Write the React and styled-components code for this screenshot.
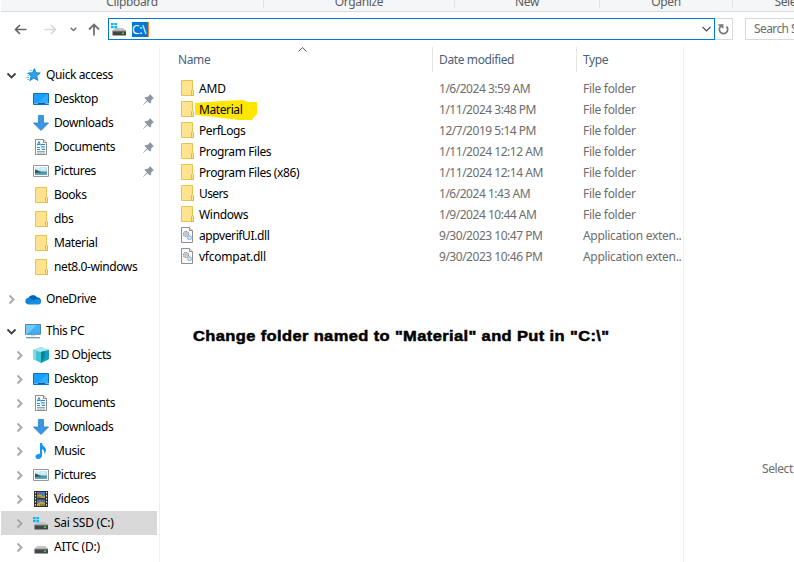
import React from "react";
import styled, { createGlobalStyle, css } from "styled-components";

const Global = createGlobalStyle`
  * { box-sizing: border-box; }
  html, body { margin: 0; padding: 0; background: #fff; overflow: hidden; }
  body { font-family: "Noto Sans", "Open Sans", sans-serif; font-size: 12px; color: #000; }
  svg { display: block; flex: none; }
`;

const Window = styled.div`
  width: 794px; height: 562px; overflow: hidden;
  display: flex; flex-direction: column; background: #fff;
`;
const Ribbon = styled.div`
  height: 12px; flex: none; margin-left: 1px; overflow: hidden;
  display: grid; grid-template-columns: 263px 191px 145px 133px 115px;
  background: #f5f6f7; border-bottom: 1px solid #dadbdc;
`;
const RibbonGroup = styled.div`
  height: 8px; line-height: 16px; text-align: center; color: #5a5d61;
  border-right: 1px solid #e2e3e4;
  letter-spacing: -0.35px;
  span { display: block; margin-top: -6px; }
`;
const NavBar = styled.div`
  height: 35px; flex: none; display: flex; align-items: flex-start; padding: 6px 0 0 8px;
`;
const NavButton = styled.div`
  width: ${(p) => p.$w}px; flex: none; height: 22px; display: flex; align-items: center; justify-content: center;
`;
const AddressBar = styled.div`
  width: 607px; flex: none; height: 22px; border: 1px solid #0078d7; margin-left: 1px;
  display: flex; align-items: center; padding: 0 3px 0 2px;
`;
const AddressText = styled.span`
  height: 15px; line-height: 15px; width: 17px; margin-left: 5px; background: #0078d7; color: #fff;
  border-right: 1px solid #ff8728; letter-spacing: -0.4px; white-space: nowrap;
`;
const Refresh = styled.div`
  width: 18px; flex: none; height: 22px; border: 1px solid #d9d9d9; border-left: 0;
  display: flex; align-items: center; justify-content: center;
`;
const Search = styled.div`
  width: 100px; flex: none; height: 22px; margin-left: 12px; border: 1px solid #d9d9d9; border-right: 0;
  padding-left: 8px; line-height: 20px; color: #6d6d6d; white-space: nowrap; letter-spacing: -0.6px;
`;
const Spacer = styled.div`flex: 1;`;
const Body = styled.div`
  flex: 1; min-height: 0; display: grid; grid-template-columns: 160px 524px 1fr;
`;
const Tree = styled.div`
  border-right: 1px solid #f0f0f0; padding: 16px 2px 0 1px; display: flex; flex-direction: column;
`;
const TreeRow = styled.div`
  height: 24px; flex: none; display: flex; align-items: center;
  padding-left: ${(p) => (p.$level ? 12 : 4)}px;
  margin-top: ${(p) => (p.$gap ? 8 : 0)}px;
  ${(p) => p.$selected && css`background: #d9d9d9;`}
`;
const Arrow = styled.div`width: 13px; height: 13px; margin-right: 7px;`;
const Label = styled.span`
  line-height: 18px; white-space: nowrap; margin-left: ${(p) => p.$ml ?? 5}px;
  letter-spacing: ${(p) => p.$ls ?? -0.4}px;
`;
const Files = styled.div`border-right: 1px solid #f0f0f0; overflow: hidden;`;
const columns = css`display: grid; grid-template-columns: 272px 144px 107px;`;
const Header = styled.div`
  ${columns} height: 26px; color: #4c607a; position: relative;
`;
const HeaderCell = styled.div`
  height: 25px; padding: 4px 0 0 ${(p) => (p.$first ? 18 : 6)}px; line-height: 18px;
  ${(p) => !p.$first && css`border-left: 1px solid #e5e5e5;`}
  letter-spacing: -0.38px;
`;
const SortMark = styled.div`position: absolute; left: 138px; top: 0;`;
const FileList = styled.div`padding-top: 5px;`;
const FileRow = styled.div`${columns} height: 21px; align-items: center; color: #6d6d6d;`;
const NameCell = styled.div`
  display: flex; align-items: center; padding-left: 19px; color: #000; position: relative;
  ${Label} { position: relative; }
`;
const Highlight = styled.svg`position: absolute; left: 35px; top: -1px;`;
const Cell = styled.div`
  padding-left: 7px; line-height: 18px; white-space: nowrap;
  letter-spacing: ${(p) => p.$ls}px;
`;
const Note = styled.div`
  width: max-content;
  margin: 58px 0 0 33px; font: 900 15px/22px "Liberation Sans", Arial, sans-serif;
  -webkit-text-stroke: 0.5px #000; white-space: nowrap; letter-spacing: 0.35px;
  transform: scaleX(1.098); transform-origin: left center;
`;
const Preview = styled.div`
  padding: 413px 0 0 78px; color: #6d6d6d; line-height: 18px; white-space: nowrap; letter-spacing: -0.4px;
`;

const Chevron = ({ open }) => (
  <svg width="13" height="13" viewBox="0 0 13 13" fill="none" stroke={open ? "#404040" : "#a6a6a6"} strokeWidth="1.8">
    <path d={open ? "M2.5 4.5l4 4 4-4" : "M4.5 2.5l4 4-4 4"} />
  </svg>
);
const Folder = () => (
  <svg width="13" height="16" viewBox="0 0 13 16">
    <path d="M.5.5h11v10h1v5H.5z" fill="#ffe391" stroke="#e9c44d" />
    <path d="M10.5 15.5v-5l1-1 1 1v5z" fill="#ffe391" stroke="#e3b93d" />
  </svg>
);
const Desktop = () => (
  <svg width="16" height="12" viewBox="0 0 16 12">
    <path d="M.5.5h15v11H.5z" fill="#18a0fb" stroke="#0873c4" />
    <path d="M15 1L4 10.5h11z" fill="#35adff" />
    <path d="M1 10.5h14" stroke="#075e9e" /><path d="M1.5 10.5h1m1 0h1m8 0h1m1 0h1" stroke="#fff" />
  </svg>
);
const Download = () => (
  <svg width="16" height="16" viewBox="0 0 16 16">
    <path d="M5.5.5h5V8h5L8 15.5.5 8h5z" fill="#3c96e6" stroke="#2b7fcc" strokeWidth=".8" />
  </svg>
);
const Document = () => (
  <svg width="12" height="16" viewBox="0 0 12 16">
    <path d="M.5.5h8l3 3v12H.5z" fill="#fff" stroke="#8c8c8c" /><path d="M8.5.5v3h3" fill="#eee" stroke="#8c8c8c" />
    <path d="M2 6.5l2-4 1.5 4M3 5.5h2" fill="none" stroke="#218bdc" />
    <path d="M6 5.5h4M2 8.5h3M2 10.5h3m2 0h3" stroke="#218bdc" /><path d="M6 7.5h4M6 8.8h4M2 12.5h8M2 14h8" stroke="#7590a4" strokeWidth=".8" />
  </svg>
);
const Picture = () => (
  <svg width="16" height="12" viewBox="0 0 16 12">
    <path d="M.5.5h15v11H.5z" fill="#fff" stroke="#989898" /><path d="M2 2h12v8H2z" fill="#c4e6f8" />
    <path d="M2 4.500l3 1 3 1h6v1.500H2z" fill="#479196" /><path d="M2 4.500l4 2 3 .8-7 .7z" fill="#33584b" /><path d="M2 8h12v2H2z" fill="#5aa0c8" />
    <path d="M3 3h4m1 1h4" stroke="#eef9ff" />
  </svg>
);
const Star = () => (
  <svg width="16" height="16" viewBox="0 0 16 16">
    <path d="M9.400 1.600l1.500 4.200 4.300.2-3.500 2.900 1.100 4.500-3.900-2.400-4 2.600 1.300-4.700L3 6.100l4.500-.3z" fill="#2fa3ee" stroke="#1687d0" />
    <path d="M4.500 3.500h2.500M1.500 6.500h2M2.500 8.500h2M1 10.500h3M2 12.500h2" stroke="#55b9f3" strokeWidth=".8" />
  </svg>
);
const Cloud = () => (
  <svg width="17" height="11" viewBox="0 0 17 11">
    <path d="M3.2 10A3.2 3.2 0 0 1 3.4 4 5 5 0 0 1 12 3.2 3.6 3.6 0 0 1 14 10z" fill="#0364b8" />
    <path d="M.3 7.5A3.5 3.5 0 0 1 6 4.5L13 9l-9.5 1.3A3.3 3.3 0 0 1 .3 7.5z" fill="#0f83d8" />
    <path d="M2 10l8-4.2c2-2.2 6-.7 6 2.2 0 1.6-1.2 2.5-2.6 2.5H4z" fill="#1490df" />
  </svg>
);
const Computer = () => (
  <svg width="16" height="15" viewBox="0 0 16 15">
    <path d="M.5.5h15v9.8H.5z" fill="#3fb1f7" stroke="#4b87b0" /><path d="M1 1h11L2 10H1z" fill="#71c9fc" />
    <path d="M6 11h4v1.5H6z" fill="#d5dce1" /><path d="M1 13.7h14" stroke="#7c95ad" strokeWidth="1.3" />
  </svg>
);
const Cube = () => (
  <svg width="16" height="16" viewBox="0 0 16 16">
    <path d="M0 3l8-3 8 3v9l-8 4-8-4z" fill="#44c3d3" /><path d="M0 3l8-3 8 3-8 2z" fill="#a9e9ed" />
    <path d="M8 5l8-2v9l-8 4z" fill="#0fa1c4" /><path d="M0 3l3 1v9l-3-1z" fill="#84dce2" /><path d="M8 5l4-1v5l-4 7z" fill="#07859d" />
  </svg>
);
const Music = () => (
  <svg width="12" height="16" viewBox="0 0 12 16">
    <path d="M5 0h2c0 3 4 4 4 7 0 1.8-.8 3-1.8 4 .5-3-.4-4.3-2.2-5v6.5C7 14.5 5.2 16 3.2 16S.5 15 .5 13.5s1.9-3 4.5-2.8z" fill="#1496ef" />
  </svg>
);
const Video = () => (
  <svg width="14" height="16" viewBox="0 0 14 16">
    <path d="M0 0h14v16H0z" fill="#303030" /><path d="M1.5 1v15M12.5 1v15" stroke="#e8e8e8" strokeDasharray="1.5 1.5" />
    <path d="M3 1h8v6H3zM3 8.5h8V15H3z" fill="#3f7cc4" /><path d="M3 5l3-3 3 4 2-2v3H3zM3 13l4-3 4 2v3H3z" fill="#ce9d35" />
    <path d="M4 3h3M7 10h3" stroke="#8c4b48" /><path d="M3 6h4M6 14h5" stroke="#3c7441" />
  </svg>
);
const Drive = ({ system }) => (
  <svg width="16" height="16" viewBox="0 0 16 16">
    <path d="M4 7h8.500l2.500 3H1.500z" fill="#c7c7c7" />
    {system && <path d="M0 2h2.700v2.300H0zM3.400 2h2.700v2.300H3.400zM0 5h2.700v2.300H0zM3.400 5h2.700v2.300H3.400z" fill="#00bcf2" />}
    <path d="M1.500 10h13.500v4.500H1.500z" fill="#454545" />
    <path d="M1.500 10h13.500" stroke="#909090" /><path d="M11 12.300h2" stroke="#32e052" strokeWidth="1.4" />
  </svg>
);
const Dll = () => (
  <svg width="13" height="16" viewBox="0 0 13 16">
    <path d="M.5.5h8l3 3v12H.5z" fill="#fafafa" stroke="#8e8e8e" /><path d="M8.5.5v3h3" fill="#eee" stroke="#8e8e8e" />
    <circle cx="5" cy="7" r="2.4" fill="#eef1f3" stroke="#818b92" strokeDasharray="1.2 .5" strokeWidth="1.3" /><circle cx="5" cy="7" r=".8" fill="#7f878c" />
    <circle cx="8.5" cy="10.7" r="1.8" fill="#e3f1fb" stroke="#79add3" strokeDasharray="1 .4" strokeWidth="1.3" />
  </svg>
);
const Pin = () => (
  <svg width="11" height="11" viewBox="0 0 11 11">
    <path d="M6.8 0L11 4.2 9.8 4.7 8.3 6.3 8 9 6.9 9.5 4.6 7.3.7 10.8H0l3.9-4.2L1.5 4.1 2.2 3l2.7-.2L6.3 1.3z" fill="#8c98a3" />
  </svg>
);

const tree = [
  { t: "Quick access", icon: Star, open: true },
  { t: "Desktop", icon: Desktop, level: 1, pin: true },
  { t: "Downloads", icon: Download, level: 1, pin: true },
  { t: "Documents", icon: Document, level: 1, pin: true },
  { t: "Pictures", icon: Picture, level: 1, pin: true },
  { t: "Books", icon: Folder, level: 1 },
  { t: "dbs", icon: Folder, level: 1 },
  { t: "Material", icon: Folder, level: 1 },
  { t: "net8.0-windows", icon: Folder, level: 1 },
  { t: "OneDrive", icon: Cloud, open: false, gap: true },
  { t: "This PC", icon: Computer, open: true, gap: true },
  { t: "3D Objects", icon: Cube, level: 1, open: false },
  { t: "Desktop", icon: Desktop, level: 1, open: false },
  { t: "Documents", icon: Document, level: 1, open: false },
  { t: "Downloads", icon: Download, level: 1, open: false },
  { t: "Music", icon: Music, level: 1, open: false },
  { t: "Pictures", icon: Picture, level: 1, open: false },
  { t: "Videos", icon: Video, level: 1, open: false },
  { t: "Sai SSD (C:)", icon: () => <Drive system />, level: 1, open: false, selected: true, ls: -0.25 },
  { t: "AITC (D:)", icon: Drive, level: 1, open: false, ls: -0.25 },
];
const files = [
  { name: "AMD", date: "1/6/2024 3:59 AM", ls: -0.1 },
  { name: "Material", date: "1/11/2024 3:48 PM" },
  { name: "PerfLogs", date: "12/7/2019 5:14 PM", ls: -0.45 },
  { name: "Program Files", date: "1/11/2024 12:12 AM" },
  { name: "Program Files (x86)", date: "1/11/2024 12:14 AM" },
  { name: "Users", date: "1/6/2024 1:43 AM", ls: -0.6 },
  { name: "Windows", date: "1/9/2024 10:44 AM", ls: -0.3 },
  { name: "appverifUI.dll", date: "9/30/2023 10:47 PM", dll: true },
  { name: "vfcompat.dll", date: "9/30/2023 10:46 PM", dll: true, ls: -0.24 },
];
const IconSlot = styled.div`
  width: 16px; flex: none; display: flex; justify-content: center;
  ${(p) => p.$raised && css`justify-content: flex-start; padding-left: 2px; margin-bottom: 1px;`}
`;
const PinSlot = styled.div`margin-right: 3px;`;

export default function App() {
  return (
    <Window>
      <Global />
      <Ribbon>
        {["Clipboard", "Organize", "New", "Open", "Select"].map((t) => (
          <RibbonGroup key={t}><span>{t}</span></RibbonGroup>
        ))}
      </Ribbon>
      <NavBar>
        <NavButton $w={25}>
          <svg width="13" height="11" viewBox="0 0 13 11" fill="none" stroke="#646464" strokeWidth="1.6"><path d="M12.5 5.5H1.5M6 1L1.5 5.5 6 10" /></svg>
        </NavButton>
        <NavButton $w={34}>
          <svg width="13" height="11" viewBox="0 0 13 11" fill="none" stroke="#d8d8d8" strokeWidth="1.6"><path d="M.5 5.5h11M7 1l4.500 4.500L7 10" /></svg>
        </NavButton>
        <NavButton $w={13}>
          <svg width="7" height="5" viewBox="0 0 7 5" fill="none" stroke="#707070" strokeWidth="1.5"><path d="M.7.7l2.800 2.800L6.300.7" /></svg>
        </NavButton>
        <NavButton $w={27}>
          <svg width="12" height="13" viewBox="0 0 12 13" fill="none" stroke="#707070" strokeWidth="1.8"><path d="M6 12.500V1.500M1 6.500l5-5 5 5" /></svg>
        </NavButton>
        <AddressBar>
          <Drive system />
          <AddressText>C:\</AddressText>
          <Spacer />
          <svg width="9" height="6" viewBox="0 0 9 6" fill="none" stroke="#444" strokeWidth="1.2"><path d="M.5.8l4 4 4-4" /></svg>
        </AddressBar>
        <Refresh>
          <svg width="11" height="12" viewBox="0 0 11 12" fill="none" stroke="#777" strokeWidth="1.7"><path d="M3.500 2.700A4.200 4.200 0 1 0 8.500 3.400M1.200 1.200v.8h3.400v3.300" /></svg>
        </Refresh>
        <Search>Search Sai SSD</Search>
      </NavBar>
      <Body>
        <Tree>
          {tree.map((r, i) => {
            const Icon = r.icon;
            return (
              <TreeRow key={i} $level={r.level} $gap={r.gap} $selected={r.selected}>
                <Arrow>{r.open !== undefined && <Chevron open={r.open} />}</Arrow>
                <IconSlot><Icon /></IconSlot>
                <Label $ls={r.ls}>{r.t}</Label>
                <Spacer />
                {r.pin && <PinSlot><Pin /></PinSlot>}
              </TreeRow>
            );
          })}
        </Tree>
        <Files>
          <Header>
            <HeaderCell $first>Name</HeaderCell>
            <HeaderCell>Date modified</HeaderCell>
            <HeaderCell>Type</HeaderCell>
            <SortMark><svg width="9" height="5" viewBox="0 0 9 5" fill="none" stroke="#555"><path d="M.5 4.500l4-4 4 4" /></svg></SortMark>
          </Header>
          <FileList>
            {files.map(({ name, date, dll, ls }) => (
              <FileRow key={name}>
                <NameCell>
                  {name === "Material" && (
                    <Highlight width="64" height="22" viewBox="1 0 64 22"><path d="M1 3L14 2 28 1 49 0 54 2 63 2V14L60 17 58 20 45 20 20 17 1 15z" fill="#ffe600" /></Highlight>
                  )}
                  <IconSlot $raised>{dll ? <Dll /> : <Folder />}</IconSlot>
                  <Label $ml={4} $ls={ls}>{name}</Label>
                </NameCell>
                <Cell $ls={-0.48}>{date}</Cell>
                <Cell $ls={-0.3}>{dll ? "Application exten.." : "File folder"}</Cell>
              </FileRow>
            ))}
          </FileList>
          <Note>Change folder named to "Material" and Put in "C:\"</Note>
        </Files>
        <Preview>Select</Preview>
      </Body>
    </Window>
  );
}
